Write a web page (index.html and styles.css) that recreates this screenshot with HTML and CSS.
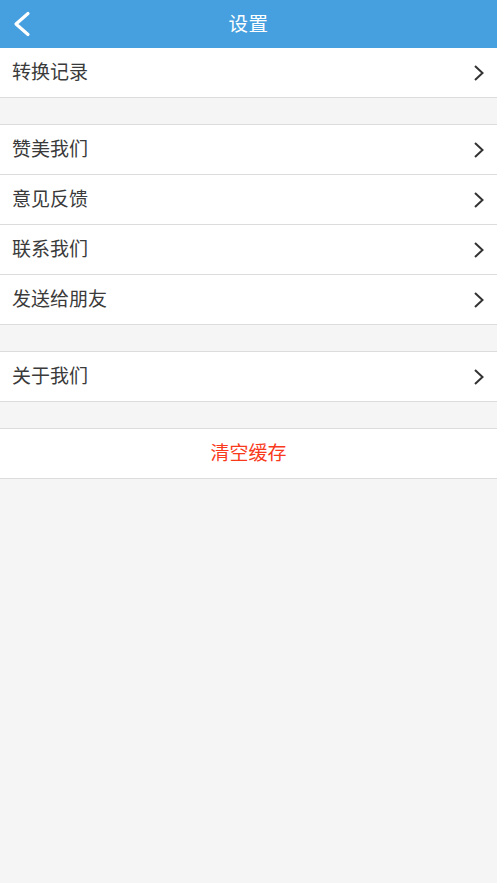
FILE: index.html
```html
<!DOCTYPE html>
<html lang="zh">
<head>
<meta charset="utf-8">
<link rel="stylesheet" href="styles.css">
</head>
<body>
<header class="topbar">
  <svg class="back" width="20" height="26" viewBox="0 0 20 26"><path d="M16 2.5 L4 13 L16 23.5" fill="none" stroke="#fff" stroke-width="3.2" stroke-linecap="round" stroke-linejoin="round"/></svg>
  <h1 class="title">设置</h1>
</header>
<main>
  <section class="group first">
    <div class="row"><span>转换记录</span><svg class="chev" width="12" height="18" viewBox="0 0 12 18"><path d="M2 2 L9.5 9 L2 16" fill="none" stroke="#333" stroke-width="2"/></svg></div>
  </section>
  <section class="group">
    <div class="row"><span>赞美我们</span><svg class="chev" width="12" height="18" viewBox="0 0 12 18"><path d="M2 2 L9.5 9 L2 16" fill="none" stroke="#333" stroke-width="2"/></svg></div>
    <div class="row"><span>意见反馈</span><svg class="chev" width="12" height="18" viewBox="0 0 12 18"><path d="M2 2 L9.5 9 L2 16" fill="none" stroke="#333" stroke-width="2"/></svg></div>
    <div class="row"><span>联系我们</span><svg class="chev" width="12" height="18" viewBox="0 0 12 18"><path d="M2 2 L9.5 9 L2 16" fill="none" stroke="#333" stroke-width="2"/></svg></div>
    <div class="row"><span>发送给朋友</span><svg class="chev" width="12" height="18" viewBox="0 0 12 18"><path d="M2 2 L9.5 9 L2 16" fill="none" stroke="#333" stroke-width="2"/></svg></div>
  </section>
  <section class="group">
    <div class="row"><span>关于我们</span><svg class="chev" width="12" height="18" viewBox="0 0 12 18"><path d="M2 2 L9.5 9 L2 16" fill="none" stroke="#333" stroke-width="2"/></svg></div>
  </section>
  <section class="group">
    <div class="row center"><span class="danger">清空缓存</span></div>
  </section>
</main>
</body>
</html>
```
FILE: styles.css
```css
html, body {
  margin: 0;
  padding: 0;
  background: #f5f5f5;
  font-family: "Noto Sans CJK SC", "Noto Sans", sans-serif;
}
.topbar {
  height: 48px;
  background: #469fde;
  display: flex;
  align-items: center;
  justify-content: center;
  position: relative;
}
.back {
  position: absolute;
  left: 12px;
  top: 11px;
}
.title {
  margin: 0 0 4px 0;
  color: #fff;
  font-size: 19.5px;
  font-weight: normal;
  letter-spacing: 0.5px;
}
.group {
  background: #fff;
  border-top: 1px solid #dcdcdc;
  border-bottom: 1px solid #dcdcdc;
  margin-top: 26px;
}
.group.first {
  margin-top: 0;
  border-top: none;
}
.row {
  height: 49px;
  display: flex;
  align-items: center;
  justify-content: space-between;
  padding: 0 12px 0 12px;
  font-size: 19px;
  color: #3a3a3a;
  border-top: 1px solid #dcdcdc;
}
.row span {
  position: relative;
  top: -2px;
}
.row:first-child {
  border-top: none;
}
.row.center {
  justify-content: center;
}
.danger {
  color: #f8391c;
}
```
